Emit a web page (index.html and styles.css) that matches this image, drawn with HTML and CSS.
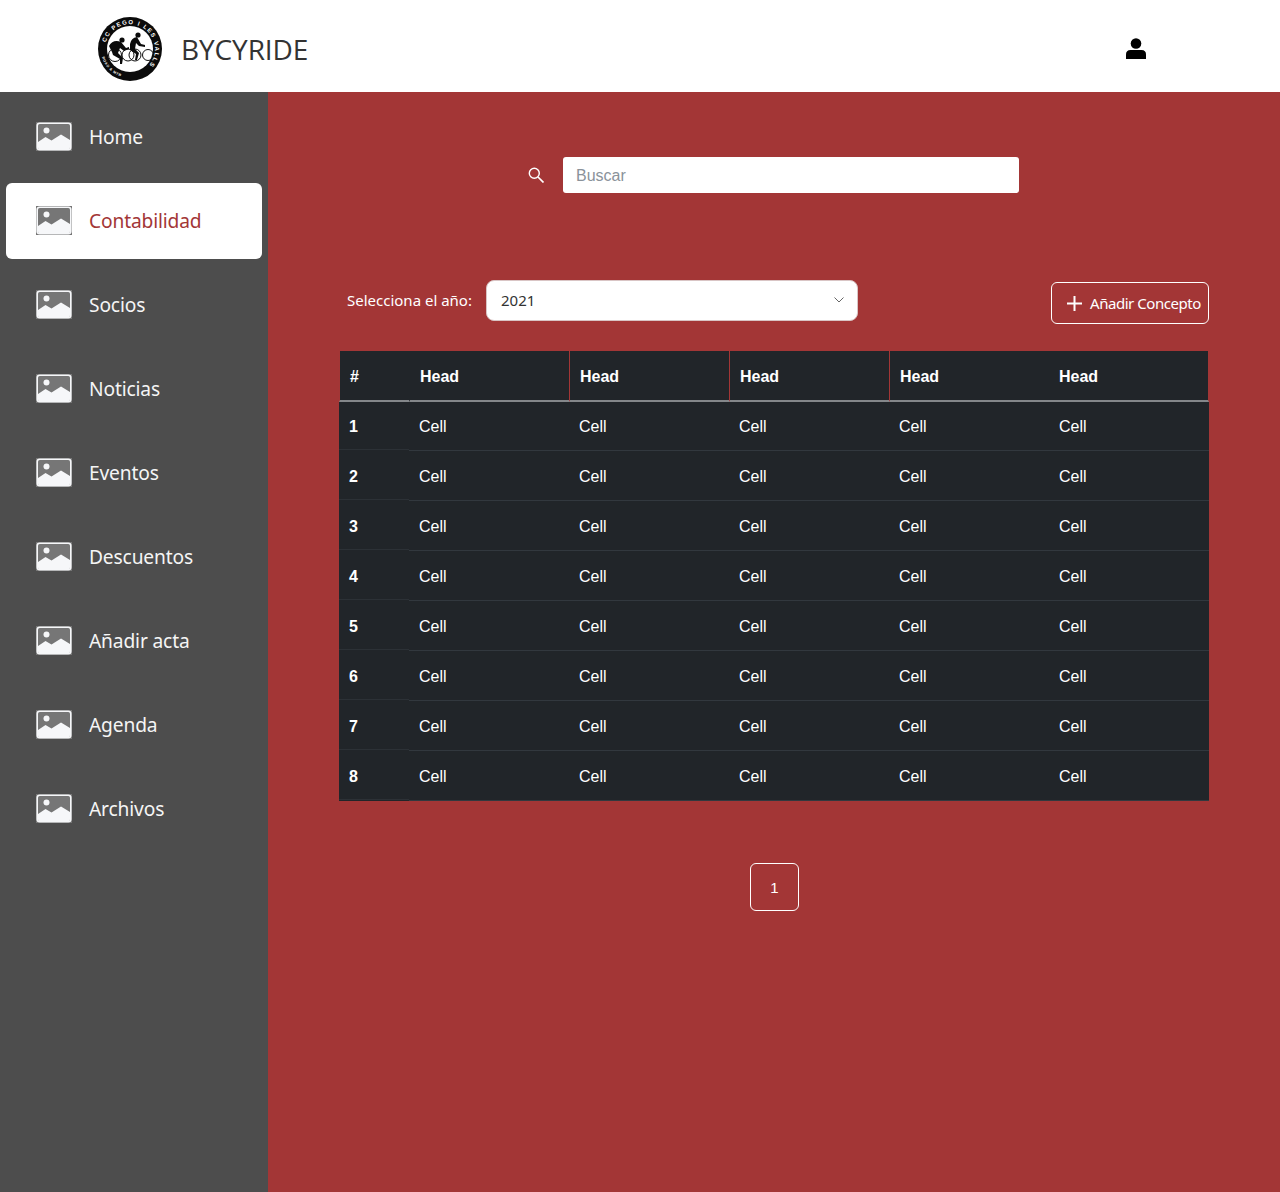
FILE: index.html
```html
<!DOCTYPE html>
<html lang="es">
<head>
<meta charset="utf-8">
<title>BYCYRIDE</title>
<link rel="stylesheet" href="styles.css">
</head>
<body>
<svg class="defs" width="0" height="0" aria-hidden="true">
  <symbol id="pic" viewBox="0 0 36 29">
    <rect width="36" height="29" fill="#767676"/>
    <rect x="1.2" y="1.2" width="33.6" height="26.6" rx="2.5" fill="#767676" stroke="#f6f7f9" stroke-width="1.6"/>
    <circle cx="10.5" cy="8.5" r="3" fill="#f6f7f9"/>
    <path d="M2 20l7.5-5 6 3.5L25 12.500l9 5.500v7.500q0 2-2 2H4q-2 0-2-2z" fill="#f6f7f9"/>
  </symbol>
</svg>
<header class="topbar">
  <div class="brand">
    <svg class="logo" viewBox="0 0 64 64" role="img" aria-label="CC Pego i les Valls">
      <defs>
        <path id="arcTop" d="M7.850 25.500A25 25 0 1 1 42 55"/>
        <path id="arcBottom" d="M4.100 40A29 29 0 0 0 29 60.800"/>
      </defs>
      <circle cx="32" cy="32" r="32" fill="#0b0b0b"/>
      <circle cx="32" cy="32" r="23" fill="#fff"/>
      <text class="logo-top"><textPath href="#arcTop">CC PEGO I LES VALLS</textPath></text>
      <text class="logo-bottom"><textPath href="#arcBottom">ROAD &amp; MTB</textPath></text>
      <g fill="none" stroke="#111" stroke-width="1">
        <circle cx="17" cy="38" r="6.500"/><circle cx="30" cy="38" r="6"/>
        <circle cx="37" cy="38" r="6"/><circle cx="50" cy="38" r="5.500"/>
      </g>
      <g fill="#0b0b0b">
        <circle cx="24" cy="23" r="2.600"/><circle cx="40" cy="18" r="2.600"/>
        <path d="M11 29q4-7 12-4l5 6 3-1 0 2-5 2-4-3-2 5 5 5-1 6-2 0 0-5-7-4-1-3z"/>
        <path d="M32 27q1-6 7-7l4 7 4 1 0 2-6-1-3-3-1 6 4 4-2 7-2 0 1-6-6-4z"/>
      </g>
    </svg>
    <span class="brand-name">BYCYRIDE</span>
  </div>
  <svg class="user" viewBox="0 0 20 21" aria-label="Usuario" role="img">
    <circle cx="10" cy="5.500" r="5.300" fill="#000"/>
    <path d="M0 21v-4.500q0-4.500 4.500-4.500h11q4.500 0 4.500 4.500V21z" fill="#000"/>
  </svg>
</header>
<div class="layout">
  <nav class="sidebar">
    <a class="nav-item"><svg class="nav-icon"><use href="#pic"/></svg><span>Home</span></a>
    <a class="nav-item active"><svg class="nav-icon"><use href="#pic"/></svg><span>Contabilidad</span></a>
    <a class="nav-item"><svg class="nav-icon"><use href="#pic"/></svg><span>Socios</span></a>
    <a class="nav-item"><svg class="nav-icon"><use href="#pic"/></svg><span>Noticias</span></a>
    <a class="nav-item"><svg class="nav-icon"><use href="#pic"/></svg><span>Eventos</span></a>
    <a class="nav-item"><svg class="nav-icon"><use href="#pic"/></svg><span>Descuentos</span></a>
    <a class="nav-item"><svg class="nav-icon"><use href="#pic"/></svg><span>Añadir acta</span></a>
    <a class="nav-item"><svg class="nav-icon"><use href="#pic"/></svg><span>Agenda</span></a>
    <a class="nav-item"><svg class="nav-icon"><use href="#pic"/></svg><span>Archivos</span></a>
  </nav>
  <main class="content">
    <div class="search">
      <svg class="search-icon" viewBox="0 0 16 16" fill="none" stroke="#fff" aria-hidden="true">
        <circle cx="6.300" cy="6.300" r="5" stroke-width="1.400"/>
        <path d="M10 10l5.500 5.500" stroke-width="1.700"/>
      </svg>
      <div class="search-box">Buscar</div>
    </div>
    <div class="toolbar">
      <span class="year-label">Selecciona el año:</span>
      <div class="year-select">
        <span>2021</span>
        <svg class="chevron" viewBox="0 0 10 6" fill="none" stroke="#666" stroke-width="1" aria-hidden="true"><path d="M.5.500L5 5 9.500.500"/></svg>
      </div>
      <button class="add-btn" type="button">
        <svg class="plus" viewBox="0 0 15 15" stroke="#fff" stroke-width="2" aria-hidden="true"><path d="M7.500 0v15M0 7.500h15"/></svg>
        Añadir Concepto
      </button>
    </div>
    <table class="data">
      <thead>
        <tr><th>#</th><th>Head</th><th>Head</th><th>Head</th><th>Head</th><th>Head</th></tr>
      </thead>
      <tbody>
        <tr><td>1</td><td>Cell</td><td>Cell</td><td>Cell</td><td>Cell</td><td>Cell</td></tr>
        <tr><td>2</td><td>Cell</td><td>Cell</td><td>Cell</td><td>Cell</td><td>Cell</td></tr>
        <tr><td>3</td><td>Cell</td><td>Cell</td><td>Cell</td><td>Cell</td><td>Cell</td></tr>
        <tr><td>4</td><td>Cell</td><td>Cell</td><td>Cell</td><td>Cell</td><td>Cell</td></tr>
        <tr><td>5</td><td>Cell</td><td>Cell</td><td>Cell</td><td>Cell</td><td>Cell</td></tr>
        <tr><td>6</td><td>Cell</td><td>Cell</td><td>Cell</td><td>Cell</td><td>Cell</td></tr>
        <tr><td>7</td><td>Cell</td><td>Cell</td><td>Cell</td><td>Cell</td><td>Cell</td></tr>
        <tr><td>8</td><td>Cell</td><td>Cell</td><td>Cell</td><td>Cell</td><td>Cell</td></tr>
      </tbody>
    </table>
    <div class="pager"><span class="page">1</span></div>
  </main>
</div>
</body>
</html>
```
FILE: styles.css
```css
* { box-sizing: border-box; }
html, body { margin: 0; padding: 0; }
body { font-family: "Noto Sans", "Open Sans", sans-serif; background: #a33636; color: #fff; }
.defs { position: absolute; }

.topbar {
  height: 92px;
  background: #fff;
  display: flex;
  align-items: center;
  justify-content: space-between;
  padding: 6px 134px 0 98px;
}
.brand { display: flex; align-items: center; gap: 19px; }
.logo { width: 64px; height: 64px; display: block; }
.logo-top { font: 700 6px "Liberation Sans", sans-serif; fill: #fff; letter-spacing: 1.300px; }
.logo-bottom { font: 700 3.500px "Liberation Sans", sans-serif; fill: #fff; letter-spacing: .6px; }
.brand-name { font-family: "Open Sans", sans-serif; font-size: 28px; color: #333; letter-spacing: -.1px; line-height: 1; }
.user { width: 20px; height: 21px; display: block; margin-top: -2px; }

.layout { display: flex; height: 1100px; }
.sidebar {
  width: 268px;
  flex: none;
  background: #4d4d4d;
  padding: 7px 6px 0;
  display: flex;
  flex-direction: column;
  gap: 8px;
}
.nav-item {
  height: 76px;
  display: flex;
  align-items: center;
  gap: 17px;
  padding: 0 0 2px 30px;
  font-size: 19.200px;
  letter-spacing: -.15px;
  color: #f5f5f5;
  border-radius: 6px;
}
.nav-item.active { background: #fff; color: #a33636; }
.nav-icon { width: 36px; height: 29px; display: block; }

.content { flex: 1; padding: 65px 71px 0; min-width: 0; }

.search { display: flex; align-items: center; padding-left: 189px; gap: 19px; }
.search-icon { width: 16px; height: 16px; display: block; }
.search-box {
  width: 456px;
  height: 36px;
  background: #fff;
  border-radius: 3px;
  padding: 0 13px;
  font: 16px/38px "Liberation Sans", sans-serif;
  color: #8a929a;
}

.toolbar { display: flex; align-items: flex-start; margin-top: 87px; padding-left: 8px; }
.year-label { font-size: 15px; line-height: 40px; width: 139px; flex: none; }
.year-select {
  width: 372px;
  height: 41px;
  background: #fff;
  border: 1px solid #d9c5c5;
  border-radius: 8px;
  padding: 0 13px 2px 14px;
  display: flex;
  align-items: center;
  justify-content: space-between;
  font-size: 15px;
  color: #333;
}
.chevron { width: 10px; height: 6px; display: block; }
.add-btn {
  margin-left: auto;
  margin-top: 2px;
  width: 158px;
  height: 42px;
  background: transparent;
  border: 1px solid #fff;
  border-radius: 6px;
  color: #fff;
  font: 15px "Noto Sans", "Open Sans", sans-serif;
  display: flex;
  align-items: center;
  gap: 8px;
  padding: 0 0 0 15px;
  white-space: nowrap;
  letter-spacing: -.45px;
}
.plus { width: 15px; height: 15px; display: block; flex: none; }

.data {
  margin-top: 27px;
  width: 870px;
  table-layout: fixed;
  border-collapse: separate;
  border-spacing: 0;
  background: #212529;
  font: 16px "Liberation Sans", sans-serif;
  color: #fff;
}
.data th, .data td { text-align: left; padding: 2px 0 0 10px; }
.data th:first-child, .data td:first-child { width: 70px; }
.data th {
  height: 51px;
  font-weight: 700;
  border-bottom: 2px solid #84878a;
  border-left: 1px solid #a33636;
}
.data th:nth-child(2) { border-left-color: #212529; }
.data th:nth-child(6) { border-left: 0; border-right: 1px solid #a33636; }
.data td { height: 50px; border-bottom: 1px solid #32383e; }
.data tbody tr:first-child td { height: 49px; padding-top: 1px; }
.data td:first-child {
  font-weight: 700;
  border-bottom-color: #212529;
  background: linear-gradient(#2c3136, #2c3136) left bottom / 100% 1px no-repeat;
}

.pager { display: flex; padding-left: 411px; margin-top: 62px; }
.page {
  width: 49px;
  height: 48px;
  border: 1px solid #fff;
  border-radius: 6px;
  padding-top: 1px;
  display: flex;
  align-items: center;
  justify-content: center;
  font: 15px "Liberation Sans", sans-serif;
}
```
